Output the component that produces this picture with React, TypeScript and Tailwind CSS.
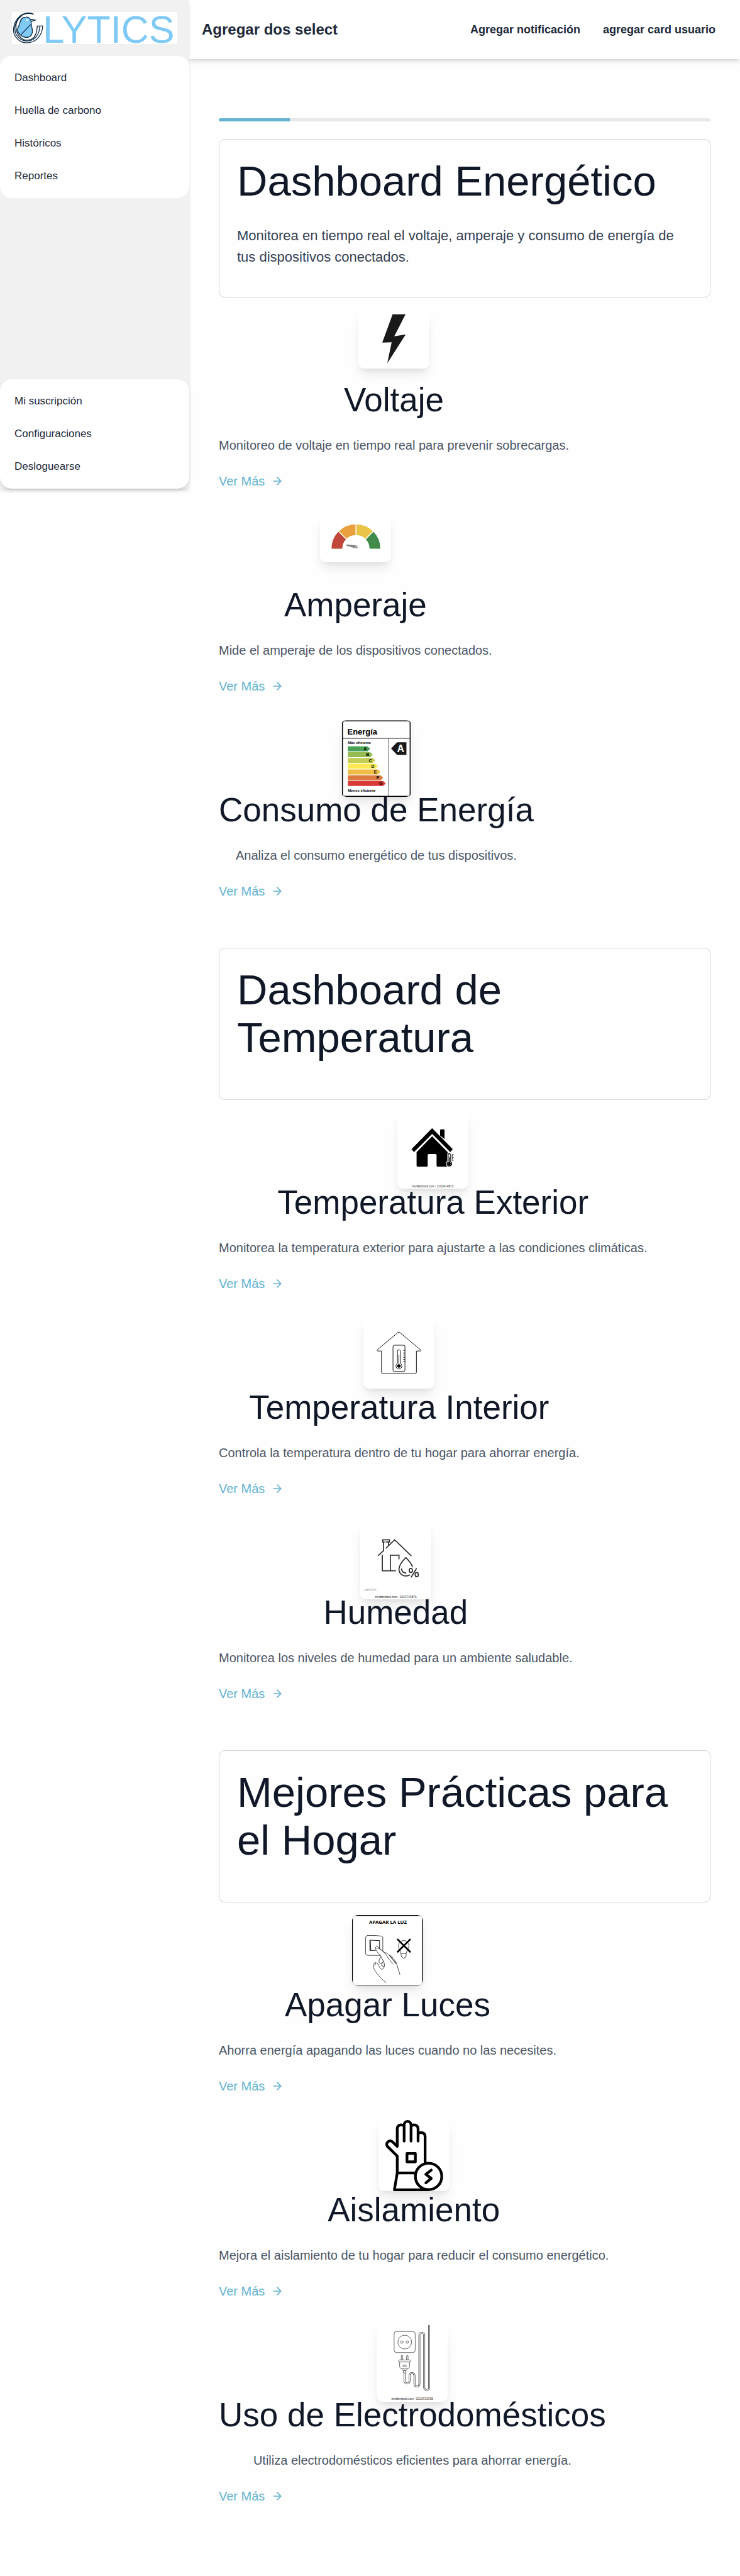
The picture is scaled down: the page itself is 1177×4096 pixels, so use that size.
import type { ReactNode } from 'react';

const mainLinks = ['Dashboard', 'Huella de carbono', 'Históricos', 'Reportes'];
const accountLinks = ['Mi suscripción', 'Configuraciones', 'Desloguearse'];

function Logo() {
  return (
    <svg viewBox="0 0 448 87" className="block w-full overflow-visible bg-white" role="img" aria-label="Clytics">
      <g fill="none" stroke="#0b2740" strokeWidth="2.2">
        <path d="M59 6C50 1 34 1 21 12C5 26 0 50 8 64C16 80 34 86 48 83C68 79 82 62 83.500 38H68.500C68 52 64 68 53 74C36 82 18 70 13 52C7 34 15 12 33 6C42 3 51 4 59 6Z" fill="#fff" />
        <path d="M27 10C9 22 4 44 11 60C20 78 42 84 58 74C70 66 75 53 75.500 38" />
        <path d="M38 14C46 13 52 19 52 28C51 36 57 46 55 56C53 65 47 69 39 69C25 68 15 57 15 47C17 40 21 33 23 25C24 19 30 14 38 14Z" fill="#7ecaf5" />
        <path d="M51 20L63 22L52 26" fill="#7ecaf5" />
        <path d="M52 33L24 62" />
      </g>
      <circle cx="41" cy="22" r="2.6" fill="#fff" />
      <text x="84" y="84" fontFamily="Liberation Sans, Arial, sans-serif" fontSize="104" fill="#7ecaf5">LYTICS</text>
    </svg>
  );
}

function Bolt() {
  return (
    <svg viewBox="0 0 192 158" className="block w-full">
      <path d="M92.500 11.500H127.500L97 71L128 66L78 144L90 87L64.500 88Z" fill="#1a1a1a" />
    </svg>
  );
}

function Gauge() {
  const arcs = [
    ['M45.500 91A51.500 51.500 0 0 1 60.600 54.600', '#bf4638'],
    ['M60.600 54.600A51.500 51.500 0 0 1 97 39.500', '#e9a03d'],
    ['M97 39.500A51.500 51.500 0 0 1 133.400 54.600', '#e9c446'],
    ['M133.400 54.600A51.500 51.500 0 0 1 148.500 91', '#408b4a'],
  ];
  return (
    <svg viewBox="0 0 192 127" className="block w-full">
      {arcs.map(([d, c]) => (
        <path key={c} d={d} fill="none" stroke={c} strokeWidth="29" />
      ))}
      <path d="M97 24V55M49 43L72 66M145 43L122 66" stroke="#fff" strokeWidth="2.5" />
      <path d="M72 79.500L98 82A4 4 0 0 1 97 90L72 83A1.800 1.800 0 0 1 72 79.500Z" fill="#808080" />
      <circle cx="97" cy="86" r="1.800" fill="#fff" />
    </svg>
  );
}

function EnergyLabel() {
  const bars = [
    ['A', '#48a155'],
    ['B', '#95bb52'],
    ['C', '#c3cf52'],
    ['D', '#fbea53'],
    ['E', '#f0bd45'],
    ['F', '#dc7a3e'],
    ['G', '#d83a37'],
  ];
  return (
    <svg viewBox="0 0 192 208" className="block w-full" fontFamily="Liberation Sans, Arial, sans-serif" fontWeight="bold">
      <rect x="4.500" y="2" width="183" height="204" rx="6" fill="#fff" stroke="#000" strokeWidth="2.600" />
      <path d="M5 49.500H187M130 50V206" stroke="#222" strokeWidth="1.500" />
      <text x="18" y="38.500" fontSize="22">Energía</text>
      <text x="19" y="65" fontSize="10">Más eficiente</text>
      <text x="19" y="194" fontSize="10">Menos eficiente</text>
      {bars.map(([letter, color], i) => {
        const y = 71 + i * 15.600;
        const tip = 79.500 + i * 7;
        return (
          <g key={letter}>
            <path d={`M19 ${y}H${tip - 7}L${tip} ${y + 6.500}L${tip - 7} ${y + 13.500}H19Z`} fill={color} />
            <text x={tip - 18} y={y + 11} fontSize="12">{letter}</text>
          </g>
        );
      })}
      <path d="M136 77L152 60H177.500V94H152Z" fill="#1a1718" />
      <text x="162" y="87" fontSize="27" fill="#fff" textAnchor="middle">A</text>
    </svg>
  );
}

function HouseOutside() {
  return (
    <svg viewBox="0 0 192 206" className="block w-full">
      <path d="M115.500 62V48Q115.500 45.500 118 45.500H125Q127.500 45.500 127.500 48V72Z" />
      <path d="M94 43L149 99L143 106L94 57L45 106L39 99Z" stroke="#000" strokeWidth="1.500" strokeLinejoin="round" />
      <path d="M94 64L136 107V144Q136 146 134 146H109Q106 146 106 144V115Q106 112 103 112H85Q82 112 82 115V144Q82 146 79 146H55Q52 146 52 144V107Z" />
      <path d="M136 113A4.500 4.500 0 0 1 145 113V131A8.500 8.500 0 1 1 136 131Z" fill="#000" stroke="#fff" strokeWidth="2" />
      <path d="M138.500 114A2 2 0 0 1 142.500 114V133A5 5 0 1 1 138.500 133Z" fill="#fff" />
      <circle cx="140.500" cy="138" r="4" />
      <path d="M140.500 121V136" stroke="#000" strokeWidth="2" />
      <path d="M148 113V131M148 113H152M148 117H151M148 121H152M148 125H151M148 129H152" stroke="#000" strokeWidth="1.200" />
      <text x="96" y="202" fontSize="8" fontFamily="Lato, sans-serif" textAnchor="middle" fill="#222">shutterstock.com · 1220414815</text>
    </svg>
  );
}

function HouseInside() {
  return (
    <svg viewBox="81 114 576 576" className="block w-full" fill="none" stroke="#0c0c0c" strokeWidth="5" strokeLinejoin="round">
      <path d="M361 236Q369 230 377 236L545 376Q549 383 542 385H511V556Q511 570 497 570H242Q228 570 228 556V385H196Q188 383 193 376Z" />
      <rect x="321" y="338" width="97" height="214" rx="12" />
      <path d="M357 486V387A12 12 0 0 1 381 387V486A24 24 0 1 1 357 486Z" />
      <circle cx="369" cy="507" r="14" fill="#000" stroke="none" />
      <path d="M369 416V500M404 380H418M404 401H418M404 418H418M404 436H418M404 454H418M404 471H418" />
    </svg>
  );
}

function Humidity() {
  return (
    <svg viewBox="108 92 576 622" className="block w-full">
      <g fill="none" stroke="#303131" strokeWidth="9" strokeLinecap="round" strokeLinejoin="miter">
        <path d="M318 298L387 232L520 360M302 249H290V231H345V249H317M297 250V320L254 359M337 250V276" />
        <path d="M287 356V483H393M352 482V357H422V387" />
        <path d="M531 449C524 424 500 398 478 375C450 402 422 436 422 470C422 512 466 538 508 517M443 467Q446 499 478 500M563 465L522 533" />
        <ellipse cx="518" cy="480" rx="13" ry="17" />
        <ellipse cx="566" cy="514" rx="13" ry="17" />
      </g>
      <text x="130" y="648" fontSize="32" fontFamily="Open Sans, sans-serif" fill="#999">–vector–</text>
      <text x="397" y="702" fontSize="24" fontFamily="Lato, sans-serif" textAnchor="middle" fill="#222">shutterstock.com · 2022725876</text>
    </svg>
  );
}

function LightsOff() {
  return (
    <svg viewBox="102 128 576 573" className="block w-full bg-black">
      <rect x="108" y="136" width="563" height="559" rx="16" fill="#fff" />
      <text x="393" y="200" fontSize="40" fontWeight="bold" fontFamily="Noto Sans, sans-serif" textAnchor="middle">APAGAR LA LUZ</text>
      <g fill="none" stroke="#161616" strokeWidth="4" strokeLinecap="round" strokeLinejoin="round">
        <path d="M228 294Q290 290 340 299Q351 302 351 313V418M334 455H228Q211 454 211 438V310Q212 296 228 294" />
        <path d="M292 415H246V332L325 335V398M250 334L254 414" strokeWidth="5" />
        <path d="M430 524C428 512 405 496 395 477C380 450 372 438 357 429L318 390C308 380 290 383 292 398C296 424 330 449 344 480L356 502C362 514 367 530 363 544C358 566 346 572 336 565C322 556 316 522 298 516C284 510 270 522 277 538C279 548 274 556 280 566C302 604 334 641 377 675" />
        <path d="M301 397L319 398L370 434C398 432 414 480 458 515L465 528L490 610M405 455C426 455 444 493 463 519M412 460L456 522M338 468C318 479 315 515 329 522C345 527 354 508 355 500M347 513L341 537Q352 546 363 543M283 535Q294 534 294 518" />
        <path d="M498 437C498 415 478 405 478 377A42 42 0 0 1 563 377C563 405 542 415 542 437M500 440H540V460Q540 473 525 474L520 481L514 474Q501 473 501 460Z" />
      </g>
      <path d="M468 322L576 430M576 322L468 430" stroke="#000" strokeWidth="13" />
    </svg>
  );
}

function Glove() {
  return (
    <svg viewBox="141 108 576 576" className="block w-full" fill="none" stroke="#000" strokeWidth="22" strokeLinecap="round" strokeLinejoin="round">
      <path d="M349 279V147A28 28 0 0 1 405 147V279M346 156C323 137 293 152 293 178V322L254 284A28 28 0 0 0 212 320L293 400V537L270 673H547M408 156C431 137 462 152 462 178V279M468 215C490 202 519 214 519 240V452M293 537H438" />
      <rect x="372" y="379" width="68" height="68" />
      <circle cx="547" cy="565" r="107" />
      <path d="M569 514L525 548L569 581L525 617" />
    </svg>
  );
}

function Plug() {
  const cord =
    'M344 535V600A20 20 0 0 0 384 600V556A20 20 0 0 1 424 556V625A20 20 0 0 0 464 625V225A20 20 0 0 1 503 225V653A20 20 0 0 0 543 653V147';
  return (
    <svg viewBox="117 147 576 621" className="block w-full">
      <g fill="none">
        <path d={cord} stroke="#222" strokeWidth="14" />
        <path d={cord} stroke="#fff" strokeWidth="7" />
      </g>
      <g fill="none" stroke="#222" strokeWidth="3.500">
        <rect x="259" y="199" width="171" height="171" rx="20" />
        <circle cx="345" cy="285" r="56" />
        <circle cx="322" cy="285" r="10" />
        <circle cx="366" cy="285" r="10" />
        <path d="M317 430V398A6 6 0 0 1 329 398V430M360 430V398A6 6 0 0 1 372 398V430" />
        <rect x="295" y="430" width="99" height="16" rx="8" />
        <path d="M304 446V480Q304 502 326 502H362Q384 502 384 480V446M326 473H362M326 485H362M322 502L332 515H356L366 502" />
        <rect x="334" y="515" width="21" height="20" rx="3" />
      </g>
      <text x="406" y="755" fontSize="24" fontFamily="Lato, sans-serif" textAnchor="middle" fill="#222">shutterstock.com · 2022923558</text>
    </svg>
  );
}

type Item = { title: string; text: string; art: ReactNode };
type Group = { title: string; intro?: string; items: Item[] };

const groups: Group[] = [
  {
    title: 'Dashboard Energético',
    intro: 'Monitorea en tiempo real el voltaje, amperaje y consumo de energía de tus dispositivos conectados.',
    items: [
      { title: 'Voltaje', text: 'Monitoreo de voltaje en tiempo real para prevenir sobrecargas.', art: <Bolt /> },
      { title: 'Amperaje', text: 'Mide el amperaje de los dispositivos conectados.', art: <Gauge /> },
      { title: 'Consumo de Energía', text: 'Analiza el consumo energético de tus dispositivos.', art: <EnergyLabel /> },
    ],
  },
  {
    title: 'Dashboard de Temperatura',
    items: [
      { title: 'Temperatura Exterior', text: 'Monitorea la temperatura exterior para ajustarte a las condiciones climáticas.', art: <HouseOutside /> },
      { title: 'Temperatura Interior', text: 'Controla la temperatura dentro de tu hogar para ahorrar energía.', art: <HouseInside /> },
      { title: 'Humedad', text: 'Monitorea los niveles de humedad para un ambiente saludable.', art: <Humidity /> },
    ],
  },
  {
    title: 'Mejores Prácticas para el Hogar',
    items: [
      { title: 'Apagar Luces', text: 'Ahorra energía apagando las luces cuando no las necesites.', art: <LightsOff /> },
      { title: 'Aislamiento', text: 'Mejora el aislamiento de tu hogar para reducir el consumo energético.', art: <Glove /> },
      { title: 'Uso de Electrodomésticos', text: 'Utiliza electrodomésticos eficientes para ahorrar energía.', art: <Plug /> },
    ],
  },
];

function NavList({ links }: { links: string[] }) {
  return (
    <ul>
      {links.map((label) => (
        <li key={label}>
          <a href="#" className="flex h-[52px] items-center px-[23px] text-[17px] text-gray-800">{label}</a>
        </li>
      ))}
    </ul>
  );
}

function Feature({ title, text, art }: Item) {
  return (
    <article className="flex w-fit flex-col items-center">
      <div className="h-[113px] w-[113px]">
        <div className="overflow-hidden rounded-[9px] bg-white shadow-[0_12px_18px_-4px_rgba(0,0,0,0.1),0_4px_7px_-2px_rgba(0,0,0,0.05)]">{art}</div>
      </div>
      <h3 className="relative text-[53px] leading-[60px] text-gray-900">{title}</h3>
      <p className="mt-7 text-xl leading-7 text-gray-600">{text}</p>
      <a href="#" className="mt-[29px] mb-10 flex items-center gap-2.5 self-start text-xl leading-7 text-[#63b3d1]">
        Ver Más
        <svg viewBox="0 0 24 24" className="size-5" fill="none" stroke="currentColor" strokeWidth="2" strokeLinecap="round" strokeLinejoin="round" aria-hidden="true">
          <path d="M5 12h14M12 5l7 7-7 7" />
        </svg>
      </a>
    </article>
  );
}

export default function App() {
  return (
    <div className="flex items-start bg-[#fefefe] pb-9 font-['Liberation_Sans',Arial,sans-serif]">
      <aside className="relative flex min-h-[777px] w-[301px] shrink-0 flex-col justify-between bg-[#f1f1f1] shadow-md">
        <div>
          <div className="p-[19px]">
            <Logo />
          </div>
          <nav aria-label="Principal" className="rounded-[19px] bg-white py-[9px]">
            <NavList links={mainLinks} />
          </nav>
        </div>
        <nav aria-label="Cuenta" className="rounded-[19px] bg-white py-[9px] shadow-md">
          <NavList links={accountLinks} />
        </nav>
      </aside>
      <div className="min-w-0 flex-1">
        <header className="flex h-[94px] items-center justify-between bg-white pr-[39px] pl-5 font-bold text-gray-800 shadow-[0_5px_7px_-1px_rgba(0,0,0,0.12),0_2px_5px_-2px_rgba(0,0,0,0.1)]">
          <h1 className="text-2xl">Agregar dos select</h1>
          <div className="flex gap-9 text-lg">
            <span>Agregar notificación</span>
            <span>agregar card usuario</span>
          </div>
        </header>
        <main className="px-[47px] pt-[94px]">
          <div role="progressbar" aria-label="Progreso" aria-valuenow={14} className="mb-7 h-[5px] overflow-hidden rounded-full bg-gray-200">
            <div className="h-full w-[14.5%] bg-[#63b3d1]" />
          </div>
          <div className="flex flex-col gap-9">
            {groups.map((group) => (
              <section key={group.title}>
                <div className="mb-5 rounded-[9px] border border-gray-300 p-7">
                  <h2 className="mb-8 text-[67px] leading-[76px] text-gray-900">{group.title}</h2>
                  {group.intro && <p className="mb-[18px] text-[22px] leading-[34px] text-gray-700">{group.intro}</p>}
                </div>
                {group.items.map((item) => (
                  <Feature key={item.title} {...item} />
                ))}
              </section>
            ))}
          </div>
        </main>
      </div>
    </div>
  );
}
